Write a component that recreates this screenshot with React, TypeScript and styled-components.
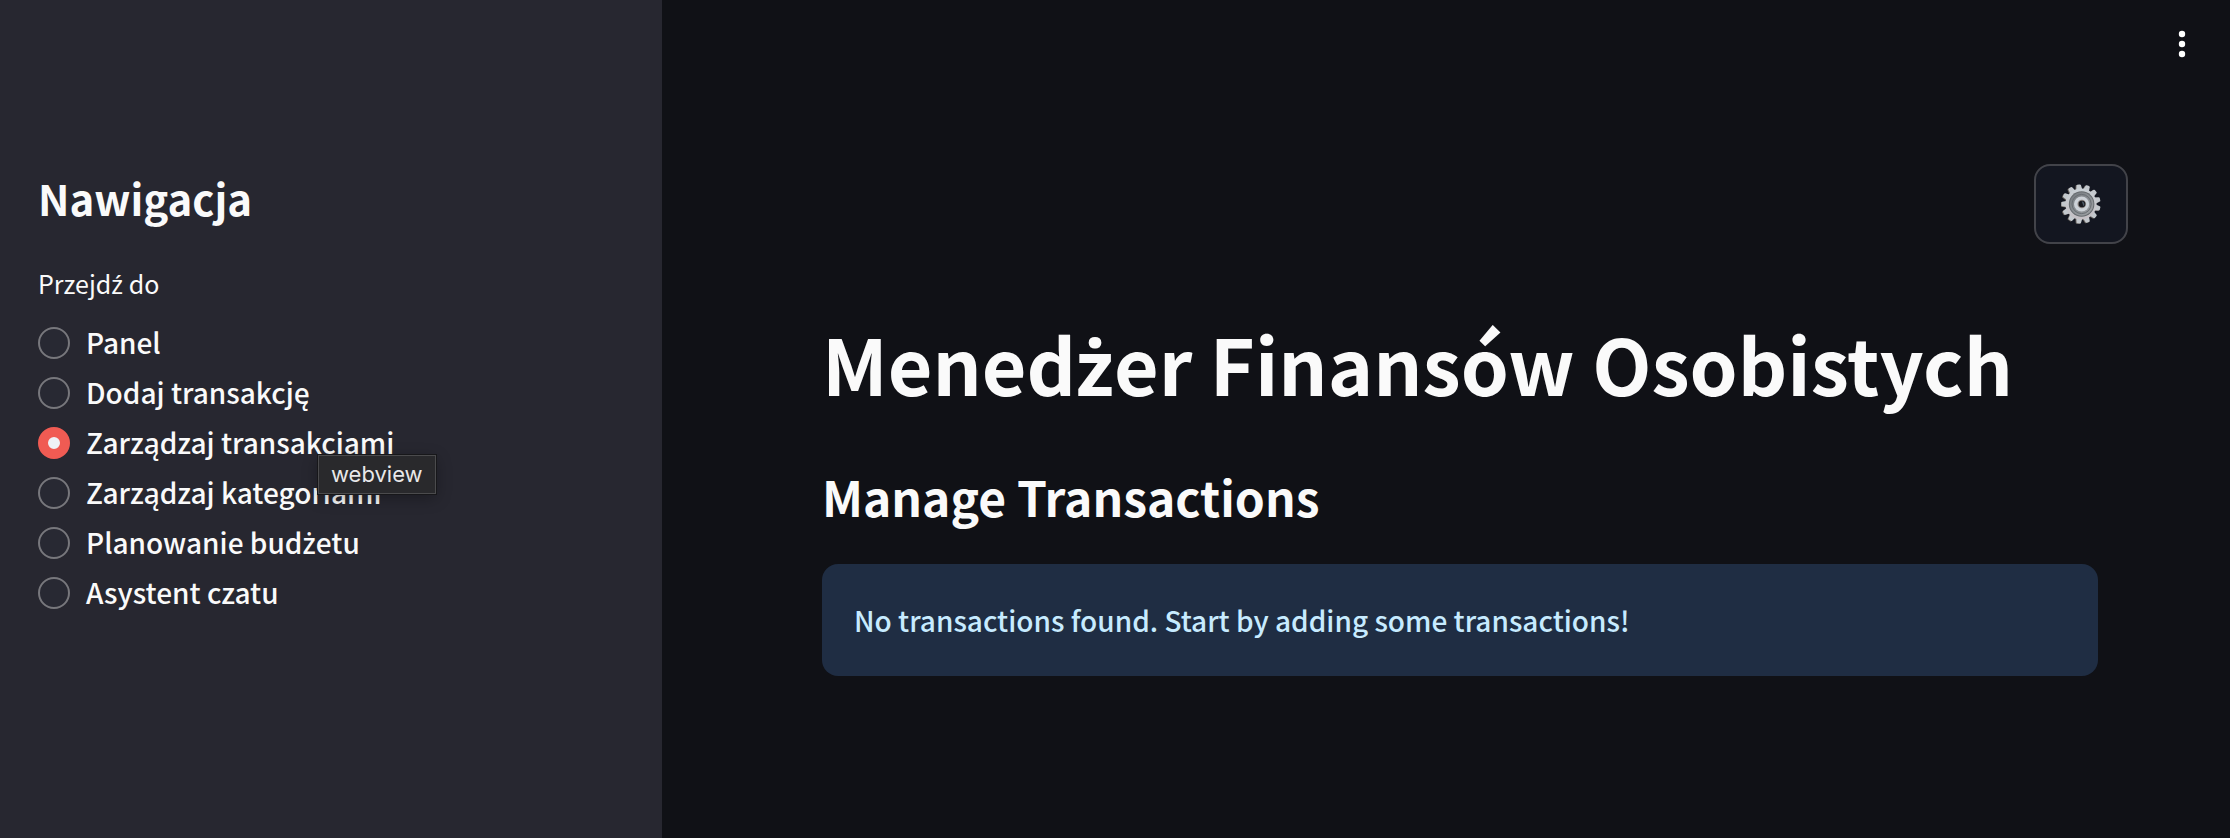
import React, { useState } from "react";
import styled, { createGlobalStyle } from "styled-components";

const GlobalStyle = createGlobalStyle`
  *, *::before, *::after { box-sizing: border-box; }
  body {
    margin: 0;
    background: #101116;
    color: #fafafa;
    font-family: "Source Sans Pro", "Noto Sans CJK JP", "Noto Sans", sans-serif;
    font-size: 28px;
    font-weight: 500;
  }
  h1, h2, p { margin: 0; }
`;

const Layout = styled.div`
  display: flex;
  min-height: 100vh;
`;

const Sidebar = styled.aside`
  flex: 0 0 662px;
  padding: 168px 38px 48px;
  background: #272730;
`;

const SidebarTitle = styled.h2`
  margin-bottom: 36px;
  font-size: 42px;
  font-weight: 700;
  line-height: 59px;
`;

const RadioGroup = styled.fieldset`
  margin: 0;
  padding: 0;
  border: 0;
  min-width: 0;
`;

const GroupLabel = styled.legend`
  margin-bottom: 15px;
  padding: 0;
  font-size: 25px;
  font-weight: 400;
  line-height: 40px;
`;

const Option = styled.label`
  display: flex;
  align-items: center;
  gap: 16px;
  width: fit-content;
  height: 50px;
  cursor: pointer;
`;

const OptionText = styled.span`
  line-height: 46px;
  padding-bottom: 3px;
`;

const Accented = styled.span`
  font-family: "Noto Sans", sans-serif;
  line-height: 1;
`;

const Radio = styled.input`
  appearance: none;
  flex: none;
  width: 32px;
  height: 32px;
  margin: 0;
  border: 2px solid #77777c;
  border-radius: 50%;
  background: #282933;
  cursor: pointer;

  &:checked {
    border: 10px solid #f05b53;
    background: #eff2f6;
  }
`;

const OptionAnchor = styled.div`
  position: relative;
`;

const Tooltip = styled.div`
  position: absolute;
  top: 37px;
  left: 280px;
  padding: 5px 12px;
  border: 1px solid #4b4b4d;
  outline: 1px solid #17171a;
  background: #29292c;
  color: #e8e8e9;
  font-family: Inter, "Liberation Sans", sans-serif;
  font-size: 22px;
  font-weight: 400;
  line-height: 27px;
  box-shadow: 0 4px 16px rgba(0, 0, 0, 0.3);
  pointer-events: none;
  z-index: 1;
`;

const Main = styled.main`
  flex: 1;
  min-width: 0;
`;

const Header = styled.header`
  display: flex;
  justify-content: flex-end;
  padding: 20px 24px;
`;

const MenuButton = styled.button`
  display: flex;
  width: 48px;
  height: 48px;
  padding: 0;
  border: 0;
  background: none;
  cursor: pointer;
`;

const Toolbar = styled.div`
  display: flex;
  justify-content: flex-end;
  padding: 76px 102px 0 0;
`;

const SettingsButton = styled.button`
  display: flex;
  align-items: center;
  justify-content: center;
  width: 94px;
  height: 80px;
  padding: 0;
  border: 2px solid #424349;
  border-radius: 16px;
  background: #131620;
  cursor: pointer;
`;

const Content = styled.div`
  padding: 66px 132px 48px 160px;
`;

const PageTitle = styled.h1`
  margin-bottom: 46px;
  font-size: 77px;
  font-weight: 700;
  line-height: 106px;
`;

const SectionTitle = styled.h2`
  margin-bottom: 34px;
  font-size: 48px;
  font-weight: 700;
  line-height: 68px;
`;

const Alert = styled.div`
  padding: 32px;
  border-radius: 16px;
  background: #1f2d43;
  color: #c7ebff;
  line-height: 48px;
`;

const KebabIcon = () => (
  <svg width="48" height="48" viewBox="0 0 48 48" fill="#fff" aria-hidden="true">
    <circle cx="24" cy="14" r="3.2" />
    <circle cx="24" cy="24" r="3.2" />
    <circle cx="24" cy="34" r="3.2" />
  </svg>
);

const TEETH = Array.from({ length: 13 }, (_, i) => (i * 360) / 13 - 7);
const TOOTH = "M-3.1 -14 L-2.2 -18.8 Q-2 -19.6 -1.2 -19.6 H1.2 Q2 -19.6 2.2 -18.8 L3.1 -14 Z";

const GearIcon = () => (
  <svg width="40" height="40" viewBox="-20 -20 40 40" aria-hidden="true">
    <defs>
      <linearGradient id="steel" x1="0" y1="0" x2="0" y2="1">
        <stop offset="0" stopColor="#c9d0d5" />
        <stop offset="1" stopColor="#c4bfc4" />
      </linearGradient>
      <linearGradient id="recess" x1="0" y1="0" x2="1" y2="1">
        <stop offset="0" stopColor="#747a7f" />
        <stop offset="1" stopColor="#9fa2a6" />
      </linearGradient>
    </defs>
    <g fill="#6b6560" transform="translate(-0.9 0.4)">
      {TEETH.map((a) => (
        <path key={a} d={TOOTH} transform={`rotate(${a})`} />
      ))}
    </g>
    <g fill="#c3c8cd">
      {TEETH.map((a) => (
        <path key={a} d={TOOTH} transform={`rotate(${a})`} />
      ))}
    </g>
    <circle r="15.6" fill="url(#steel)" />
    <circle cx="0.6" r="12.8" fill="#656a6e" />
    <circle cx="0.6" r="11.8" fill="url(#recess)" />
    <circle cx="0.6" r="9.6" fill="none" stroke="#686d72" strokeWidth="1" />
    <circle cx="0.6" r="7.6" fill="#cdd2d8" />
    <circle cx="0.8" r="4.3" fill="#8a8380" />
    <circle cx="1" r="3.3" fill="#17191f" />
    <path d="M0.6 -2.8 A3 3 0 0 1 2.6 2.2 Z" fill="#4f5a66" />
  </svg>
);

const PolishText = ({ text }: { text: string }) => (
  <>
    {text
      .split(/([źż])/)
      .map((part, i) => (i % 2 ? <Accented key={i}>{part}</Accented> : part))}
  </>
);

const PAGES = [
  "Panel",
  "Dodaj transakcję",
  "Zarządzaj transakcjami",
  "Zarządzaj kategoriami",
  "Planowanie budżetu",
  "Asystent czatu",
];

export default function App() {
  const [page, setPage] = useState(PAGES[2]);

  return (
    <>
      <GlobalStyle />
      <Layout lang="pl">
        <Sidebar>
          <SidebarTitle>Nawigacja</SidebarTitle>
          <RadioGroup>
            <GroupLabel>
              <PolishText text="Przejdź do" />
            </GroupLabel>
            {PAGES.map((name) => (
              <OptionAnchor key={name}>
                <Option>
                  <Radio
                    type="radio"
                    name="page"
                    value={name}
                    checked={page === name}
                    onChange={() => setPage(name)}
                  />
                  <OptionText>
                    <PolishText text={name} />
                  </OptionText>
                </Option>
                {page === name && <Tooltip role="tooltip">webview</Tooltip>}
              </OptionAnchor>
            ))}
          </RadioGroup>
        </Sidebar>
        <Main>
          <Header>
            <MenuButton type="button" aria-label="Menu">
              <KebabIcon />
            </MenuButton>
          </Header>
          <Toolbar>
            <SettingsButton type="button" aria-label="Ustawienia">
              <GearIcon />
            </SettingsButton>
          </Toolbar>
          <Content>
            <PageTitle>
              <PolishText text="Menedżer Finansów Osobistych" />
            </PageTitle>
            <SectionTitle>Manage Transactions</SectionTitle>
            <Alert role="status">No transactions found. Start by adding some transactions!</Alert>
          </Content>
        </Main>
      </Layout>
    </>
  );
}
